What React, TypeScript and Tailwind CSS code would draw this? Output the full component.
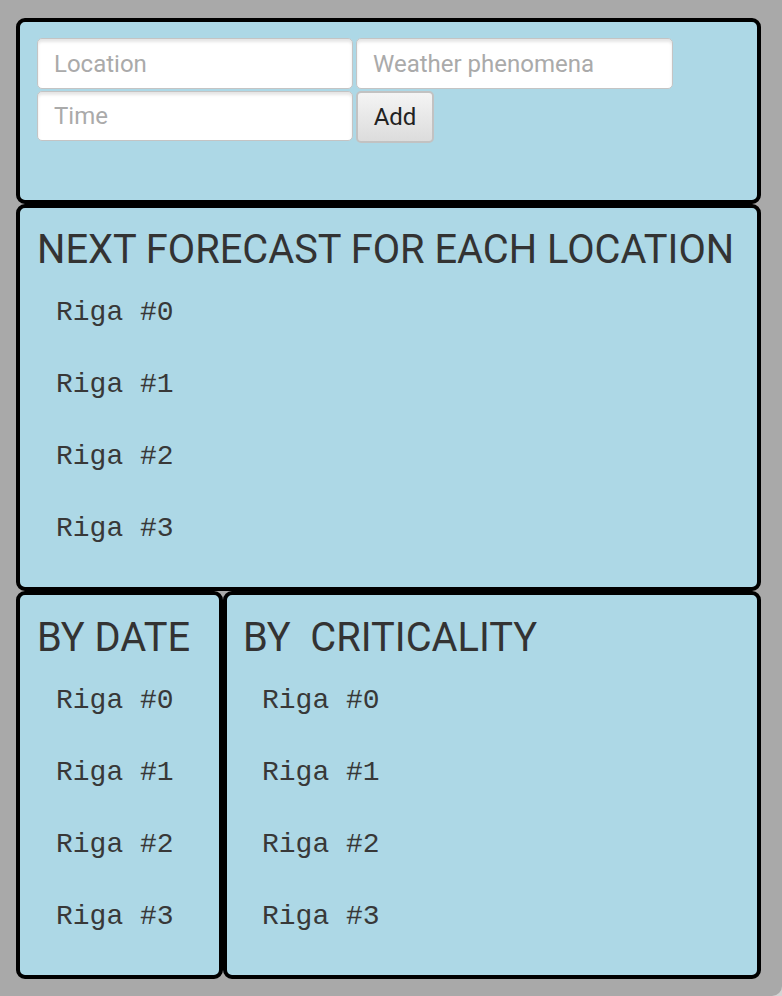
import React from 'react';

const ITEMS = ['Riga #0', 'Riga #1', 'Riga #2', 'Riga #3'];

const ForecastList: React.FC = () => (
  <ul className="mt-[4px] pl-[19px] font-['Liberation_Mono',monospace] text-[28px] leading-[72px] text-[#383838]">
    {ITEMS.map((item) => (
      <li key={item}>{item}</li>
    ))}
  </ul>
);

export default function App() {
  return (
    <div className="w-[782px] h-[996px] bg-[#d4d4d4] font-['Roboto',sans-serif]">
      <div className="h-full bg-[#a9a9a9] rounded-br-[10px] pl-[16px] pt-[18px]">
        {/* form */}
        <div className="w-[745px] h-[186px] border-4 border-black rounded-[9px] bg-[#add8e6] pl-[17px] pt-[16px]">
          <div className="grid grid-cols-[316px_317px] gap-x-[3px] gap-y-[2px]">
            <input
              placeholder="Location"
              className="h-[51px] rounded-[5px] border border-[#c4c4c4] bg-white px-[16px] text-[24px] text-[#333] shadow-[inset_0_3px_3px_rgba(0,0,0,0.1)] outline-none placeholder:text-[#aaa]"
            />
            <input
              placeholder="Weather phenomena"
              className="h-[51px] rounded-[5px] border border-[#c4c4c4] bg-white px-[16px] text-[24px] text-[#333] shadow-[inset_0_3px_3px_rgba(0,0,0,0.1)] outline-none placeholder:text-[#aaa]"
            />
            <input
              placeholder="Time"
              className="h-[50px] rounded-[5px] border border-[#c4c4c4] bg-white px-[16px] text-[24px] text-[#333] shadow-[inset_0_3px_3px_rgba(0,0,0,0.1)] outline-none placeholder:text-[#aaa]"
            />
            <div>
              <button className="w-[78px] h-[52px] rounded-[5px] border-2 border-[#c2c2c2] bg-gradient-to-b from-[#f4f4f4] to-[#dcdcdc] text-[24px] text-[#222]">
                Add
              </button>
            </div>
          </div>
        </div>

        {/* next forecast */}
        <div className="w-[745px] h-[387px] border-4 border-black rounded-[9px] bg-[#add8e6] pl-[17px] pt-[18px]">
          <h2 className="text-[39.8px] leading-[47px] text-[#333]">NEXT FORECAST FOR EACH LOCATION</h2>
          <ForecastList />
        </div>

        <div className="flex w-[745px]">
          <div className="w-[207px] h-[388px] border-4 border-black rounded-[9px] bg-[#add8e6] pl-[17px] pt-[19px]">
            <h2 className="text-[39.8px] leading-[47px] text-[#333]">BY DATE</h2>
            <ForecastList />
          </div>
          <div className="w-[538px] h-[388px] border-4 border-black rounded-[9px] bg-[#add8e6] pl-[16px] pt-[19px]">
            <h2 className="whitespace-pre text-[39.8px] leading-[47px] text-[#333]">BY  CRITICALITY</h2>
            <ForecastList />
          </div>
        </div>
      </div>
    </div>
  );
}
